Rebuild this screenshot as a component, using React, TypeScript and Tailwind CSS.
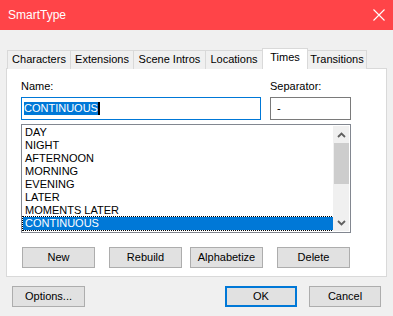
import React from 'react';

const tabs = [
  { label: 'Characters', w: 'w-[64px]' },
  { label: 'Extensions', w: 'w-[64px]' },
  { label: 'Scene Intros', w: 'w-[73px]' },
  { label: 'Locations', w: 'w-[58px]' },
  { label: 'Times', w: 'w-[46px]', active: true },
  { label: 'Transitions', w: 'w-[60px]' },
];

const times = ['DAY', 'NIGHT', 'AFTERNOON', 'MORNING', 'EVENING', 'LATER', 'MOMENTS LATER', 'CONTINUOUS'];

const Button: React.FC<{ label: string; className?: string; primary?: boolean }> = ({ label, className, primary }) => (
  <div
    className={`flex h-[21px] items-center justify-center bg-[#e1e1e1] text-black ${
      primary ? 'border-2 border-[#0078d7]' : 'border border-[#adadad]'
    } ${className ?? ''}`}
  >
    {label}
  </div>
);

const Chevron: React.FC<{ down?: boolean }> = ({ down }) => (
  <svg width="9" height="6" viewBox="0 0 9 6" className={down ? 'rotate-180' : ''}>
    <polyline points="1,5 4.5,1.5 8,5" fill="none" stroke="#606060" strokeWidth="1.8" />
  </svg>
);

export default function App() {
  return (
    <div className="flex h-[316px] w-[393px] flex-col bg-[#f0f0f0] font-['Liberation_Sans',Arial,sans-serif] text-[11px] leading-[13px] text-black">
      {/* title bar */}
      <div className="flex h-[30px] shrink-0 items-center justify-between bg-[#ff4448] pl-[8px] pr-[8px]">
        <span className="text-[12px] text-white">SmartType</span>
        <svg width="12" height="12" viewBox="0 0 12 12">
          <path d="M0.5 0.5 L11.5 11.5 M11.5 0.5 L0.5 11.5" stroke="#fff" strokeWidth="1.1" />
        </svg>
      </div>

      <div className="px-[6px] pt-[18px]">
        {/* tabs */}
        <div className="relative z-10 flex h-[21px] items-end pl-px">
          {tabs.map((t, i) => (
            <div
              key={t.label}
              className={`${t.w} ${i > 0 ? '-ml-px' : ''} flex items-center justify-center border-x border-t border-[#d9d9d9] ${
                t.active ? 'h-[21px] bg-white pb-[3px]' : 'h-[19px] bg-[#f0f0f0] pb-px'
              }`}
            >
              {t.label}
            </div>
          ))}
        </div>

        {/* panel */}
        <div className="-mt-px h-[209px] border border-[#d9d9d9] bg-white pl-[14px] pt-[11px]">
          <div className="flex gap-[9px]">
            <div className="flex w-[240px] flex-col">
              <span className="h-[14px]">Name:</span>
              <div className="mt-[3px] flex h-[23px] items-center border border-[#0078d7] pl-[2px]">
                <span className="bg-[#0078d7] text-white">CONTINUOUS</span>
                <span className="h-[13px] w-[2px] bg-black" />
              </div>
            </div>
            <div className="flex w-[81px] flex-col">
              <span className="h-[14px]">Separator:</span>
              <div className="mt-[3px] flex h-[23px] items-center border border-[#7a7a7a] pl-[6px]">-</div>
            </div>
          </div>

          {/* list */}
          <div className="mt-[4px] flex h-[109px] w-[330px] border border-[#828790]">
            <div className="flex-1 pl-[1px] pt-px">
              {times.map((t) => (
                <div
                  key={t}
                  className={`h-[13px] pl-[2px] ${
                    t === 'CONTINUOUS' ? 'bg-[#0078d7] text-white outline-1 outline-dotted outline-black' : ''
                  }`}
                >
                  {t}
                </div>
              ))}
            </div>
            <div className="my-px mr-px flex w-[16px] flex-col items-center bg-[#f0f0f0]">
              <div className="flex h-[17px] items-center justify-center">
                <Chevron />
              </div>
              <div className="w-[15px] h-[41px] bg-[#cdcdcd]" />
              <div className="flex-1" />
              <div className="flex h-[17px] items-center justify-center">
                <Chevron down />
              </div>
            </div>
          </div>

          {/* list buttons */}
          <div className="mt-[14px] flex pl-px">
            <Button label="New" className="w-[73px]" />
            <Button label="Rebuild" className="ml-[14px] w-[73px]" />
            <Button label="Alphabetize" className="ml-[8px] w-[73px]" />
            <Button label="Delete" className="ml-[14px] w-[73px]" />
          </div>
        </div>
      </div>

      {/* dialog buttons */}
      <div className="mt-[9px] flex px-[12px]">
        <Button label="Options..." className="w-[73px]" />
        <div className="flex-1" />
        <Button label="OK" primary className="w-[72px]" />
        <Button label="Cancel" className="ml-[12px] w-[72px]" />
      </div>
    </div>
  );
}
